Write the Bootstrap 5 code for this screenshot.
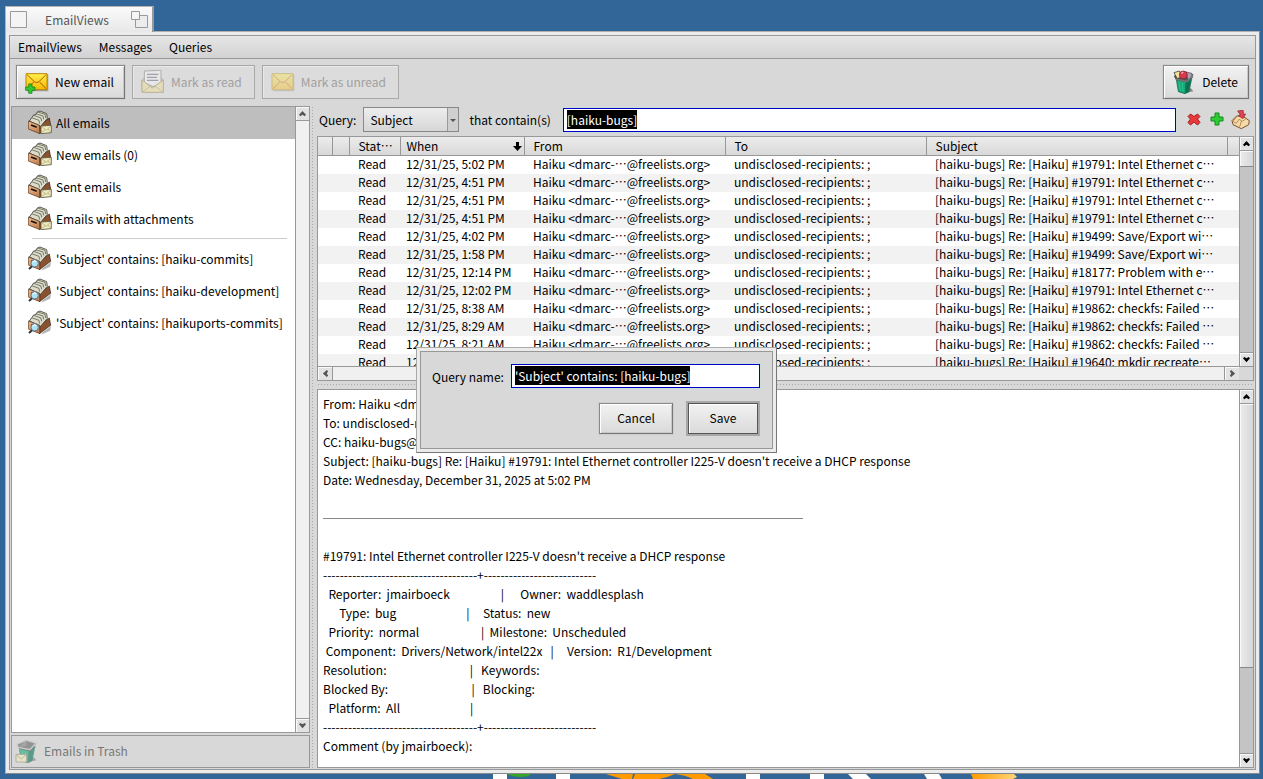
<!DOCTYPE html>
<html lang="en">
<head>
<meta charset="utf-8">
<meta name="viewport" content="width=device-width, initial-scale=1">
<title>EmailViews</title>
<link href="https://cdn.jsdelivr.net/npm/bootstrap@5.3.0/dist/css/bootstrap.min.css" rel="stylesheet">
<style>
:root{--line:#989898;--face:#d8d8d8}
body{background:#336698;color:#000;font:12px/19px "Noto Sans CJK JP","Noto Sans",sans-serif;overflow:hidden}
.desk{padding:6px 3px 0 5px}
.win-tab{width:149px;height:26px;margin-bottom:-1px;padding:0 4px;border:1px solid #b4b4b4;border-right:2px solid #999;border-bottom:0;background:linear-gradient(#fafafa,#e8e8e8);color:#555;z-index:1}
.win-tab span{margin-right:4px}
.win-frame{border:1px solid #b0b0b0;border-right-color:#888;border-bottom-color:#888;background:#ebebeb;padding:3px;min-height:0}
.win-body{border:1px solid var(--line);background:var(--face);min-height:0}
.menus{height:23px;padding:0 8px 2px;gap:17px;border-bottom:1px solid var(--line);background:linear-gradient(#e6e6e6,#d2d2d2)}
.menus a{color:#000;text-decoration:none}
.tools{height:46px;padding:0 6px;gap:7px}
.push{border:1px solid #8a8a8a;border-right-color:#777;border-bottom-color:#777;border-radius:0;background:linear-gradient(#f2f2f2,#dadada);box-shadow:inset 1px 1px #fff,inset -1px -1px #c8c8c8,0 0 0 1px #cecece;color:#000;font:inherit;padding:0 0 2px}
.tools .push{height:34px;padding:0 10px 1px 8px;gap:6px}
.push:disabled{color:#a0a0a0;border-color:#a8a8a8;background:#dcdcdc;box-shadow:inset 1px 1px #e8e8e8}
.tools .push:disabled{padding-right:12px}
.push:disabled svg{opacity:.38}
.panes{padding:1px 1px 1px;min-height:0}
.side{width:299px;gap:2px}
.sunken{border:1px solid var(--line);background:#fff;min-height:0}
.views{padding:0;margin:0;white-space:nowrap}
.views a{height:32px;padding:0 0 2px 16px;gap:4px;color:#000;text-decoration:none}
.views a.active{background:#bebebe}
.views hr{margin:3px 8px 4px 20px;border-top:1px solid #ccc;opacity:1}
.trash{height:33px;padding:0 0 2px 3px;gap:5px;border:1px solid var(--line);background:var(--face);color:#777}
.split-v{width:7px;background:radial-gradient(circle,#aaa 1px,transparent 1px) 1px 0/3px 3px repeat-y}
.split-h{height:8px;background:radial-gradient(circle,#aaa 1px,transparent 1px) 0 2px/3px 3px repeat-x}
.query{height:30px;padding:0 3px 3px 2px}
.query select{width:96px;height:25px;margin:0 10px 0 7px;padding:0 6px;border:1px solid #888;border-radius:0;appearance:none;color:#000;font:inherit;
 background:linear-gradient(90deg,transparent 83px,#999 83px,#999 84px,#cfcfcf 84px),linear-gradient(#eee,#d6d6d6)}
.pick{position:relative}
.pick::after{content:"";position:absolute;right:13px;top:12px;border:3px solid transparent;border-top-color:#555;border-bottom:0;pointer-events:none}
.field{border:1px solid #0000c8;border-radius:0;outline:0;height:24px;padding:0 3px 1px;font:inherit;color:#fff;background:linear-gradient(#000,#000) 3px 1px/70px 19px no-repeat #fff;min-width:0;box-shadow:0 0 0 1px #cdd}
.query .field{margin:0 9px 0 12px}
.query button,.bar button{border:0;padding:0;background:none;display:flex}
.query button{margin-right:5px}
.query button:last-child{margin:0}
.results{height:245px;background:var(--face)}
.results table{table-layout:fixed;width:100%;margin:0;line-height:18px;white-space:nowrap;background:#fff}
.results th{height:18px;padding:0 5px 0 9px;font-weight:400;background:linear-gradient(#ececec,#d8d8d8);border-right:1px solid var(--line);border-bottom:1px solid var(--line);overflow:hidden}
.results th:last-child{border-right:0}
.results td{height:18px;padding:0 0 2px 9px;line-height:16px}
.results .when{padding-left:6px;padding-right:2px}
.results tbody tr:nth-child(even){background:#f2f2f2}
.bar{background:#c4c4c4}
.bar button{width:13px;height:14px;align-items:center;justify-content:center;background:#e2e2e2;box-shadow:inset 1px 1px #fafafa;flex:none}
.bar.vert{width:14px;border-left:1px solid var(--line)}
.bar.vert button{border-bottom:1px solid var(--line)}
.bar.vert button:last-child{border-bottom:0;border-top:1px solid var(--line)}
.results .bar.vert{margin-bottom:13px;border-bottom:1px solid var(--line)}
.bar.flat{height:14px;border-top:1px solid var(--line);background:#f0f0f0}
.bar.flat button{height:13px;width:15px;border-right:1px solid var(--line)}
.bar.flat button:last-child{border-right:0;border-left:1px solid var(--line)}
.thumb{background:linear-gradient(90deg,#ececec,#d6d6d6);box-shadow:inset 1px 1px #fafafa;border-bottom:1px solid #888}
.mail{padding:4px 5px 0;overflow:hidden;white-space:pre}
.mail hr{width:480px;margin:10px 0 8px;border-top:1px solid #888;opacity:1}
.ask{position:absolute;left:416px;top:347px;width:361px;padding:3px;border:1px solid #aaa;border-right-color:#777;border-bottom-color:#777;background:#ebebeb;z-index:5}
.ask form{border:1px solid var(--line);background:var(--face);padding:12px 12px 14px 11px}
.ask .field{width:249px;background-size:175px 19px}
.ask .choices{gap:13px;margin-top:15px}
.ask .push{width:74px;height:31px}
.ask .push.main{width:70px;margin:0 2px;border-color:#555;box-shadow:inset 1px 1px #fff,0 0 0 2px #a8a8a8}
.backdrop-art{height:5px}
.backdrop-art svg{display:block;margin-left:475px}
</style>
</head>
<body>
<svg width="0" height="0" class="position-absolute" aria-hidden="true">
 <defs>
  <linearGradient id="gy" x2="0" y2="1"><stop stop-color="#fff04a"/><stop offset="1" stop-color="#f8b800"/></linearGradient>
  <linearGradient id="gb" x2="1" y2="1"><stop stop-color="#f0b888"/><stop offset="1" stop-color="#b87848"/></linearGradient>
  <linearGradient id="go"><stop stop-color="#ff9a00"/><stop offset="1" stop-color="#ffd77a"/></linearGradient>
  <symbol id="cab" viewBox="0 0 72 72">
   <path d="M40 70l30-22-4 14-22 10z" fill="#000" opacity=".3"/>
   <path d="M36 46L64 24l4 22-34 25z" fill="#8a5230" stroke="#2c1a10" stroke-width="2"/>
   <path d="M4 33l8-11 5-7 6-1 5-8 8-3 20 8 2 14-20 24z" fill="#dcdccb" stroke="#3c3c34" stroke-width="2.5"/>
   <path d="M11 23l22 8 2 10M17 16l22 8 2 10M23 11l22 7 2 10M29 6l22 7 2 11" fill="none" stroke="#66665a" stroke-width="2.5"/>
   <path d="M1 33l33 12 2 26L1 57z" fill="url(#gb)" stroke="#4a2c18" stroke-width="2"/>
   <path d="M9 46l17 7" fill="none" stroke="#e0a478" stroke-width="8"/><path d="M9 45l17 7" fill="none" stroke="#111" stroke-width="5"/>
  </symbol>
  <symbol id="cabmail" viewBox="0 0 72 72"><use href="#cab"/>
   <path d="M39 48l31-2v22l-31 3z" fill="#efe9bf" stroke="#5c583c" stroke-width="2.5"/><path d="M42 51l13 10 12-12M42 67l9-8M67 65l-7-8" fill="none" stroke="#a39c70" stroke-width="2"/></symbol>
  <symbol id="cabfind" viewBox="0 0 72 72"><use href="#cab"/>
   <path d="M13 60L3 69" stroke="#333" stroke-width="6"/><circle cx="20" cy="52" r="11" fill="#aee4fa" stroke="#5c7886" stroke-width="3"/><path d="M13 50q4-8 11-5" stroke="#fff" stroke-width="3" fill="none"/></symbol>
  <symbol id="env" viewBox="0 0 72 72">
   <path d="M4 13h66v51H6z" fill="#000" opacity=".3"/>
   <path d="M3 11h63v48H3z" fill="url(#gy)" stroke="#b8860b" stroke-width="3"/>
   <path d="M6 14l22 21q7 6 14 0l21-21M6 56l20-20M63 56L44 36" fill="none" stroke="#b8500c" stroke-width="3"/></symbol>
  <symbol id="envnew" viewBox="0 0 72 72"><use href="#env"/>
   <path d="M11 42h10v9h9v10h-9v9H11v-9H2V51h9z" fill="#34c832" stroke="#0c7a14" stroke-width="2"/></symbol>
  <symbol id="envopen" viewBox="0 0 72 72">
   <path d="M3 30L34 4l33 26v36H3z" fill="#e8cf70" stroke="#86712c" stroke-width="3"/>
   <path d="M10 3l50-2v38L36 50 10 38z" fill="#fafafa" stroke="#666" stroke-width="3"/>
   <path d="M18 13h34M18 22h30M18 31h34" stroke="#446" stroke-width="4"/>
   <path d="M3 30l31 24 33-24v37H3z" fill="#f3dd86" stroke="#86712c" stroke-width="3"/><path d="M4 66l25-18M66 66L41 48" stroke="#86712c" stroke-width="2"/></symbol>
  <symbol id="bin" viewBox="0 0 72 72">
   <path d="M36 70l28-6-8-10z" fill="#000" opacity=".4"/>
   <path d="M13 28l34 8 13-14-9 43-12 6-20-6z" fill="#19a878" stroke="#0b5a42" stroke-width="2"/>
   <path d="M41 34l17-12-8 43-11 5z" fill="#0c7052"/><path d="M21 36l4 26M31 38l2 27" stroke="#2cc494" stroke-width="3"/>
   <path d="M7 18L30 7l33 7-17 22-34-8z" fill="#555" stroke="#333" stroke-width="2"/>
  </symbol>
  <symbol id="binfull" viewBox="0 0 72 72"><use href="#bin"/>
   <path d="M6 8l16-5 9 17-15 6z" fill="#efe49c" stroke="#222" stroke-width="2"/><path d="M42 6l17 4 2 12-14 7z" fill="#ad9fb8" stroke="#444" stroke-width="2"/>
   <circle cx="34" cy="15" r="12" fill="#d43a4c" stroke="#781824" stroke-width="2"/><path d="M28 10l6-4" stroke="#ffb0b8" stroke-width="4"/>
   <path d="M11 27l34 8 18-19" fill="none" stroke="#777" stroke-width="5"/></symbol>
  <symbol id="binmail" viewBox="0 0 72 72"><use href="#bin"/>
   <path d="M7 15L34 4l29 8-18 20-36-7z" fill="#666" stroke="#c4c4c4" stroke-width="4"/><path d="M34 4v16L12 24" fill="#888"/>
   <path d="M3 46h32v23H3z" fill="#efe9bf" stroke="#77735a" stroke-width="2"/><path d="M5 48l14 12 14-12" fill="none" stroke="#888460" stroke-width="2"/></symbol>
  <symbol id="up" viewBox="0 0 8 8"><path d="M0 5.5L4 1l4 4.500-1.500 1.500L4 5.500 1.500 7z"/></symbol>
 </defs>
</svg>

<div class="desk d-flex flex-column vh-100">
 <div class="win-tab d-flex align-items-center justify-content-between position-relative">
  <svg width="17" height="17"><path d="M.5.5h16v16H.5z" fill="#f4f4f4" stroke="#999"/></svg>
  <span>EmailViews</span>
  <svg width="17" height="17"><path d="M4.500 4.500h12v12h-12z" fill="#ececec" stroke="#999"/><path d="M.5.5h8v8h-8z" fill="#f6f6f6" stroke="#999"/></svg>
 </div>
 <main class="win-frame d-flex flex-column flex-grow-1">
  <div class="win-body d-flex flex-column flex-grow-1">
   <nav class="menus d-flex align-items-center"><a href="#">EmailViews</a><a href="#">Messages</a><a href="#">Queries</a></nav>
   <div class="tools d-flex align-items-center">
    <button class="push d-flex align-items-center"><svg width="24" height="24"><use href="#envnew"/></svg>New email</button>
    <button class="push d-flex align-items-center" disabled><svg width="24" height="24"><use href="#envopen"/></svg>Mark as read</button>
    <button class="push d-flex align-items-center" disabled><svg width="24" height="24"><use href="#env"/></svg>Mark as unread</button>
    <button class="push d-flex align-items-center ms-auto"><svg width="24" height="24"><use href="#binfull"/></svg>Delete</button>
   </div>
   <div class="panes d-flex flex-grow-1">
    <aside class="side d-flex flex-column flex-shrink-0">
     <div class="sunken d-flex flex-grow-1">
      <nav class="views flex-grow-1">
       <a href="#" class="active d-flex align-items-center"><svg width="24" height="24"><use href="#cabmail"/></svg>All emails</a>
       <a href="#" class="d-flex align-items-center"><svg width="24" height="24"><use href="#cabmail"/></svg>New emails (0)</a>
       <a href="#" class="d-flex align-items-center"><svg width="24" height="24"><use href="#cabmail"/></svg>Sent emails</a>
       <a href="#" class="d-flex align-items-center"><svg width="24" height="24"><use href="#cabmail"/></svg>Emails with attachments</a>
       <hr>
       <a href="#" class="d-flex align-items-center"><svg width="24" height="24"><use href="#cabfind"/></svg>'Subject' contains: [haiku-commits]</a>
       <a href="#" class="d-flex align-items-center"><svg width="24" height="24"><use href="#cabfind"/></svg>'Subject' contains: [haiku-development]</a>
       <a href="#" class="d-flex align-items-center"><svg width="24" height="24"><use href="#cabfind"/></svg>'Subject' contains: [haikuports-commits]</a>
      </nav>
      <div class="bar vert d-flex flex-column justify-content-between" style="background:#f0f0f0">
       <button aria-label="Scroll up"><svg width="7" height="7" fill="#555"><use href="#up"/></svg></button>
       <button aria-label="Scroll down"><svg width="7" height="7" fill="#555"><use href="#up" transform="rotate(180 3.500 3.500)"/></svg></button>
      </div>
     </div>
     <div class="trash d-flex align-items-center"><svg width="24" height="24" opacity=".6"><use href="#binmail"/></svg>Emails in Trash</div>
    </aside>
    <div class="split-v flex-shrink-0"></div>
    <section class="d-flex flex-column flex-grow-1" style="min-width:0">
     <div class="query d-flex align-items-center">
      <label for="attr">Query:</label>
      <div class="pick"><select id="attr"><option>Subject</option></select></div>
      <label for="term">that contain(s)</label>
      <input id="term" class="field flex-grow-1" value="[haiku-bugs]">
      <button aria-label="Remove"><svg width="18" height="18" viewBox="0 0 18 18"><path d="M5.500 3L9 5.500 12.500 3 15 5.500 12.500 8 15 11.500 12.500 14 9 11 5.500 14 3 11.500 5.500 8 3 5.500z" fill="#e83a3a" stroke="#a81820"/></svg></button>
      <button aria-label="Add"><svg width="18" height="18" viewBox="0 0 18 18"><path d="M7 2h4v4h4v4h-4v4H7v-4H3V6h4z" fill="#2ecb34" stroke="#128a1c"/></svg></button>
      <button aria-label="Save query"><svg width="20" height="20" viewBox="0 0 60 60"><path d="M3 32l14-14 18 0 20 14-2 12-22 12L6 44z" fill="#f6dca8" stroke="#7a5228" stroke-width="3"/><path d="M17 20l-11 14 10 6 8-12 8 4-6 18M34 34l14-10" fill="none" stroke="#a87a44" stroke-width="2.500"/><path d="M20 3l16-3 2 13 6-1-8 14-14-9 6-2z" fill="#e04450" stroke="#8c1c28" stroke-width="2"/></svg></button>
     </div>
     <div class="sunken results d-flex flex-shrink-0">
      <div class="d-flex flex-column flex-grow-1" style="min-width:0">
       <div class="flex-grow-1 overflow-hidden">
        <table lang="ja">
         <colgroup><col style="width:14px"><col style="width:17px"><col style="width:51px"><col style="width:124px"><col style="width:201px"><col style="width:201px"><col style="width:301px"><col></colgroup>
         <thead><tr><th class="p-0"></th><th class="p-0"></th><th class="pe-0">Stat…</th><th class="when"><div class="d-flex align-items-center justify-content-between">When<svg width="9" height="9"><path d="M3 0h3v4h3L4.500 9 0 4h3z"/></svg></div></th><th>From</th><th>To</th><th>Subject</th><th class="p-0"></th></tr></thead>
         <tbody>
          <tr><td></td><td></td><td>Read</td><td class="when">12/31/25, 5:02 PM</td><td>Haiku &lt;dmarc-…@freelists.org&gt;</td><td>undisclosed-recipients: ;</td><td>[haiku-bugs] Re: [Haiku] #19791: Intel Ethernet c…</td><td></td></tr>
          <tr><td></td><td></td><td>Read</td><td class="when">12/31/25, 4:51 PM</td><td>Haiku &lt;dmarc-…@freelists.org&gt;</td><td>undisclosed-recipients: ;</td><td>[haiku-bugs] Re: [Haiku] #19791: Intel Ethernet c…</td><td></td></tr>
          <tr><td></td><td></td><td>Read</td><td class="when">12/31/25, 4:51 PM</td><td>Haiku &lt;dmarc-…@freelists.org&gt;</td><td>undisclosed-recipients: ;</td><td>[haiku-bugs] Re: [Haiku] #19791: Intel Ethernet c…</td><td></td></tr>
          <tr><td></td><td></td><td>Read</td><td class="when">12/31/25, 4:51 PM</td><td>Haiku &lt;dmarc-…@freelists.org&gt;</td><td>undisclosed-recipients: ;</td><td>[haiku-bugs] Re: [Haiku] #19791: Intel Ethernet c…</td><td></td></tr>
          <tr><td></td><td></td><td>Read</td><td class="when">12/31/25, 4:02 PM</td><td>Haiku &lt;dmarc-…@freelists.org&gt;</td><td>undisclosed-recipients: ;</td><td>[haiku-bugs] Re: [Haiku] #19499: Save/Export wi…</td><td></td></tr>
          <tr><td></td><td></td><td>Read</td><td class="when">12/31/25, 1:58 PM</td><td>Haiku &lt;dmarc-…@freelists.org&gt;</td><td>undisclosed-recipients: ;</td><td>[haiku-bugs] Re: [Haiku] #19499: Save/Export wi…</td><td></td></tr>
          <tr><td></td><td></td><td>Read</td><td class="when">12/31/25, 12:14 PM</td><td>Haiku &lt;dmarc-…@freelists.org&gt;</td><td>undisclosed-recipients: ;</td><td>[haiku-bugs] Re: [Haiku] #18177: Problem with e…</td><td></td></tr>
          <tr><td></td><td></td><td>Read</td><td class="when">12/31/25, 12:02 PM</td><td>Haiku &lt;dmarc-…@freelists.org&gt;</td><td>undisclosed-recipients: ;</td><td>[haiku-bugs] Re: [Haiku] #19791: Intel Ethernet c…</td><td></td></tr>
          <tr><td></td><td></td><td>Read</td><td class="when">12/31/25, 8:38 AM</td><td>Haiku &lt;dmarc-…@freelists.org&gt;</td><td>undisclosed-recipients: ;</td><td>[haiku-bugs] Re: [Haiku] #19862: checkfs: Failed …</td><td></td></tr>
          <tr><td></td><td></td><td>Read</td><td class="when">12/31/25, 8:29 AM</td><td>Haiku &lt;dmarc-…@freelists.org&gt;</td><td>undisclosed-recipients: ;</td><td>[haiku-bugs] Re: [Haiku] #19862: checkfs: Failed …</td><td></td></tr>
          <tr><td></td><td></td><td>Read</td><td class="when">12/31/25, 8:21 AM</td><td>Haiku &lt;dmarc-…@freelists.org&gt;</td><td>undisclosed-recipients: ;</td><td>[haiku-bugs] Re: [Haiku] #19862: checkfs: Failed …</td><td></td></tr>
          <tr><td></td><td></td><td>Read</td><td class="when">12/31/25, 8:17 AM</td><td>Haiku &lt;dmarc-…@freelists.org&gt;</td><td>undisclosed-recipients: ;</td><td>[haiku-bugs] Re: [Haiku] #19640: mkdir recreate…</td><td></td></tr>
         </tbody>
        </table>
       </div>
       <div class="bar flat d-flex justify-content-between flex-shrink-0">
        <button aria-label="Scroll left"><svg width="7" height="7" fill="#555"><use href="#up" transform="rotate(-90 3.500 3.500)"/></svg></button>
        <button aria-label="Scroll right"><svg width="7" height="7" fill="#555"><use href="#up" transform="rotate(90 3.500 3.500)"/></svg></button>
       </div>
      </div>
      <div class="bar vert d-flex flex-column flex-shrink-0">
       <button aria-label="Scroll up"><svg width="7" height="7"><use href="#up"/></svg></button>
       <div class="thumb" style="height:16px"></div>
       <button class="mt-auto" aria-label="Scroll down"><svg width="7" height="7"><use href="#up" transform="rotate(180 3.500 3.500)"/></svg></button>
      </div>
     </div>
     <div class="split-h flex-shrink-0"></div>
     <div class="sunken d-flex flex-grow-1">
      <article class="mail flex-grow-1"><div>From: Haiku &lt;dmarc-noreply@freelists.org&gt;
To: undisclosed-recipients: ;
CC: haiku-bugs@freelists.org
Subject: [haiku-bugs] Re: [Haiku] #19791: Intel Ethernet controller I225-V doesn't receive a DHCP response
Date: Wednesday, December 31, 2025 at 5:02 PM
 </div><hr><div> 
#19791: Intel Ethernet controller I225-V doesn't receive a DHCP response
-------------------------------------+---------------------------
  Reporter:  jmairboeck                   |      Owner:  waddlesplash
      Type:  bug                          |     Status:  new
  Priority:  normal                       |  Milestone:  Unscheduled
 Component:  Drivers/Network/intel22x   |     Version:  R1/Development
Resolution:                               |   Keywords:
Blocked By:                               |   Blocking:
  Platform:  All                          |
-------------------------------------+---------------------------
Comment (by jmairboeck):</div></article>
      <div class="bar vert d-flex flex-column flex-shrink-0">
       <button aria-label="Scroll up"><svg width="7" height="7"><use href="#up"/></svg></button>
       <div class="thumb" style="height:70%"></div>
       <button class="mt-auto" aria-label="Scroll down"><svg width="7" height="7"><use href="#up" transform="rotate(180 3.500 3.500)"/></svg></button>
      </div>
     </div>
    </section>
   </div>
  </div>
 </main>
 <div class="backdrop-art flex-shrink-0 overflow-hidden">
  <svg width="560" height="5" viewBox="480 0 560 5"><path d="M493 0h14v5h-14zM556 0h14v5h-14zM746 0h14v5h-14zM810 0h14v5h-14zM848 0h18l5 5h-18zM924 0h15l3 5h-15z" fill="#fff"/><path d="M507 0h24q-2 3-10 3-8 0-14-3z" fill="#37a526"/><path d="M606 0h27l-1 5h-10zM635 0h40l-8 3-8 2h-26zM675 0h30l8 5h-20q-8-4-18-5z" fill="#ff9a00"/><path d="M971 0h43l3 3-4 2h-40z" fill="url(#go)"/></svg>
 </div>
</div>

<div class="ask" role="dialog" aria-label="Save query">
 <form>
  <div class="d-flex align-items-center justify-content-between"><label for="qname">Query name:</label><input id="qname" class="field" value="'Subject' contains: [haiku-bugs]"></div>
  <div class="choices d-flex justify-content-end"><button type="button" class="push">Cancel</button><button type="button" class="push main">Save</button></div>
 </form>
</div>
<script src="https://cdn.jsdelivr.net/npm/bootstrap@5.3.0/dist/js/bootstrap.bundle.min.js"></script>
</body>
</html>
